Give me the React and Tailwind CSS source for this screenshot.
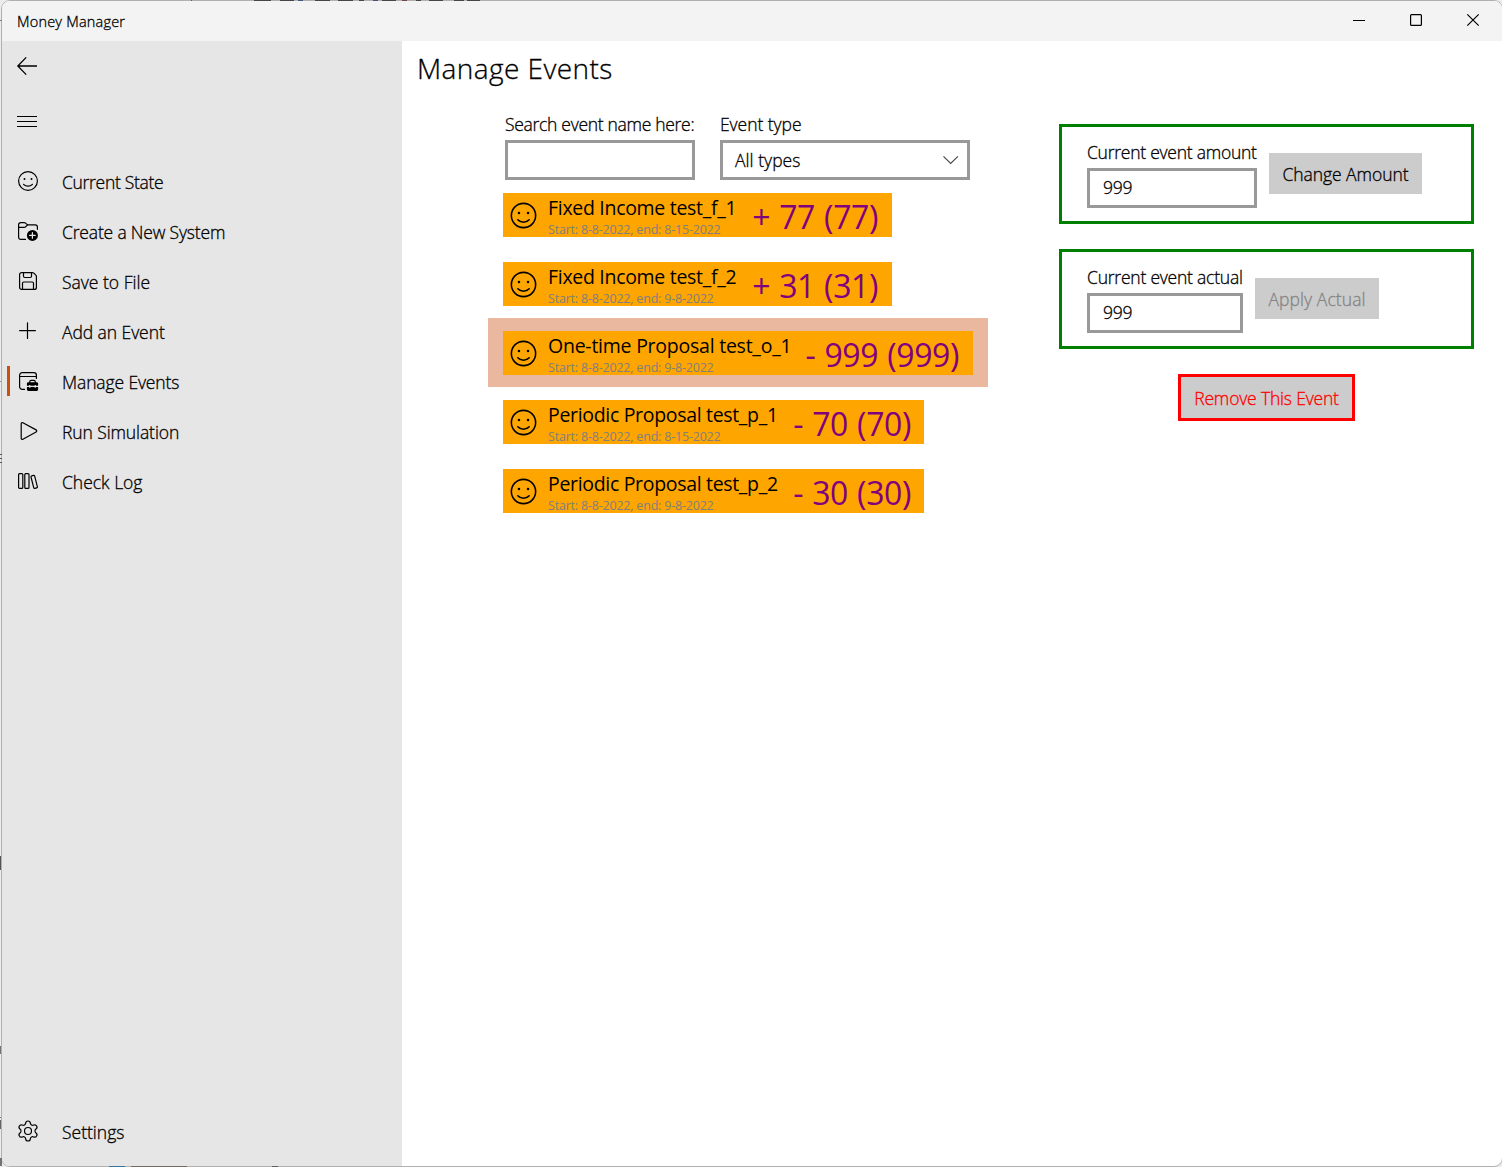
const stroke = { fill: "none", stroke: "currentColor", strokeWidth: 1.2, strokeLinecap: "round", strokeLinejoin: "round" };

function Svg({ children, className = "size-6" }) {
  return (
    <svg viewBox="0 0 24 24" className={`${className} shrink-0`} {...stroke}>
      {children}
    </svg>
  );
}

function Smiley({ className }) {
  return (
    <Svg className={className}>
      <circle cx="12" cy="12" r="9.4" />
      <circle cx="8.5" cy="10" r="1" fill="currentColor" stroke="none" />
      <circle cx="15.5" cy="10" r="1" fill="currentColor" stroke="none" />
      <path d="M7.6 15.3c2.2 2.5 6.6 2.5 8.8 0" />
    </Svg>
  );
}

function FolderAdd() {
  return (
    <Svg>
      <path d="M9.5 20.4H4.7a2.1 2.1 0 0 1-2.1-2.1V5.7a2.1 2.1 0 0 1 2.1-2.1h3.4c.5 0 1 .2 1.4.5l2.1 1.8h7.7a2.1 2.1 0 0 1 2.1 2.1v2.3" />
      <path d="M2.6 8.4h5.6c.5 0 1-.2 1.4-.6l2-1.9" />
      <circle cx="16.4" cy="16.4" r="5.5" fill="currentColor" stroke="none" />
      <path d="M16.4 13.6v5.6M13.6 16.4h5.6" stroke="#e6e6e6" />
    </Svg>
  );
}

function Save() {
  return (
    <Svg>
      <path d="M3.6 5.6a2 2 0 0 1 2-2h10.7c.6 0 1.1.2 1.5.6l2 2c.4.4.6.9.6 1.5v10.7a2 2 0 0 1-2 2H5.6a2 2 0 0 1-2-2z" />
      <path d="M7.5 3.6v3.7c0 .7.5 1.2 1.2 1.2h5.6c.7 0 1.2-.5 1.2-1.2V3.6" />
      <path d="M6.5 20.4v-6.2c0-.7.5-1.2 1.2-1.2h8.6c.7 0 1.2.5 1.2 1.2v6.2" />
    </Svg>
  );
}

function Add() {
  return (
    <Svg>
      <path d="M11.5 3.8v15.7M3.6 11.6h15.8" />
    </Svg>
  );
}

function WindowToolbox() {
  return (
    <Svg>
      <path d="M8.5 20.4H6.2a2.6 2.6 0 0 1-2.6-2.6V6.2a2.6 2.6 0 0 1 2.6-2.6h11.6a2.6 2.6 0 0 1 2.6 2.6v3.3M3.6 7.5h16.8" />
      <path d="M13.8 13.5v-1c0-.7.5-1.2 1.2-1.2h3c.7 0 1.2.5 1.2 1.2v1" />
      <path
        d="M12.3 13.2h8.4c.8 0 1.4.6 1.4 1.4v2.1h-2.3v-.8h-1.2v.8h-4.2v-.8h-1.2v.8h-2.3v-2.1c0-.8.6-1.4 1.4-1.4zM10.9 17.9h2.3v.8h1.2v-.8h4.2v.8h1.2v-.8h2.3v2.6c0 .8-.6 1.4-1.4 1.4h-8.400c-.8 0-1.400-.6-1.400-1.400z"
        fill="currentColor"
        stroke="none"
      />
    </Svg>
  );
}

function Play() {
  return (
    <Svg>
      <path d="M5.200 4.700c0-.9.900-1.400 1.700-1l13.200 7.200c.8.400.8 1.600 0 2L6.900 20.300c-.8.400-1.700-.1-1.700-1z" />
    </Svg>
  );
}

function Library() {
  return (
    <Svg>
      <rect x="2.6" y="4.6" width="4.2" height="14.8" rx="1" />
      <rect x="8.8" y="4.6" width="4.2" height="14.8" rx="1" />
      <path d="M15.700 6.900l1.900-.5c.5-.1 1 .1 1.100.7l2.700 10.700c.1.500-.1 1-.7 1.100l-1.900.5c-.5.100-1-.1-1.100-.7L15 8c-.1-.5.200-1 .7-1.100z" />
    </Svg>
  );
}

function Gear() {
  return (
    <Svg>
      <path d="M9.671 4.136a2.34 2.34 0 0 1 4.659 0 2.34 2.34 0 0 0 3.319 1.915 2.34 2.34 0 0 1 2.33 4.033 2.34 2.34 0 0 0 0 3.831 2.34 2.34 0 0 1-2.33 4.033 2.34 2.34 0 0 0-3.319 1.915 2.34 2.34 0 0 1-4.659 0 2.34 2.34 0 0 0-3.32-1.915 2.34 2.34 0 0 1-2.33-4.033 2.34 2.34 0 0 0 0-3.831A2.34 2.34 0 0 1 6.35 6.051a2.34 2.34 0 0 0 3.319-1.915" />
      <circle cx="12" cy="12" r="3.5" />
    </Svg>
  );
}

const nav = [
  { label: "Current State", Icon: Smiley, tracking: "tracking-[-0.30px]" },
  { label: "Create a New System", Icon: FolderAdd, tracking: "tracking-[-0.17px]" },
  { label: "Save to File", Icon: Save, tracking: "tracking-normal" },
  { label: "Add an Event", Icon: Add, tracking: "tracking-[-0.07px]" },
  { label: "Manage Events", Icon: WindowToolbox, tracking: "tracking-[-0.12px]", active: true },
  { label: "Run Simulation", Icon: Play, tracking: "tracking-[-0.10px]" },
  { label: "Check Log", Icon: Library, tracking: "tracking-normal" },
];

const events = [
  { name: "Fixed Income test_f_1", dates: "Start: 8-8-2022, end: 8-15-2022", amount: "+ 77 (77)", width: "w-[389px]", pad: "pr-[14px]", track: "tracking-[-0.30px]" },
  { name: "Fixed Income test_f_2", dates: "Start: 8-8-2022, end: 9-8-2022", amount: "+ 31 (31)", width: "w-[389px]", pad: "pr-[14px]", track: "tracking-[-0.30px]" },
  { name: "One-time Proposal test_o_1", dates: "Start: 8-8-2022, end: 9-8-2022", amount: "- 999 (999)", width: "w-[470px]", pad: "pr-[14px]", track: "tracking-[-0.24px]", selected: true },
  { name: "Periodic Proposal test_p_1", dates: "Start: 8-8-2022, end: 8-15-2022", amount: "- 70 (70)", width: "w-[421px]", pad: "pr-[13px]", track: "tracking-[-0.32px]" },
  { name: "Periodic Proposal test_p_2", dates: "Start: 8-8-2022, end: 9-8-2022", amount: "- 30 (30)", width: "w-[421px]", pad: "pr-[13px]", track: "tracking-[-0.32px]" },
];

// Slivers of the windows behind this one: [x, y, width, height, colour]
const backdrop = [
  [191, 0, 1, 1, "#555"],
  [254, 0, 17, 1, "#3b383c"], [280, 0, 14, 1, "#3b383c"], [298, 0, 5, 1, "#3b4a7c"], [315, 0, 15, 1, "#3b383c"],
  [338, 0, 15, 1, "#3b383c"], [359, 0, 5, 1, "#3b383c"], [373, 0, 5, 1, "#3b4a6c"], [382, 0, 14, 1, "#3b383c"],
  [402, 0, 5, 1, "#6b3a3c"], [416, 0, 5, 1, "#3b383c"], [429, 0, 14, 1, "#3b383c"], [454, 0, 10, 1, "#3b383c"], [467, 0, 13, 1, "#3b383c"],
  [0, 20, 2, 1, "#777"], [0, 381, 1, 1, "#888"], [0, 454, 2, 1, "#444"], [0, 458, 2, 1, "#444"], [0, 462, 2, 1, "#444"],
  [0, 856, 1, 14, "#444"], [0, 1046, 1, 8, "#666"], [0, 1117, 1, 1, "#666"], [0, 1120, 1, 9, "#555"], [0, 1158, 2, 8, "#666"],
  [109, 1166, 16, 1, "#2b6f96"], [131, 1166, 56, 1, "#6b625c"], [272, 1166, 6, 1, "#555"],
];

function NavItem({ label, Icon, tracking, active }) {
  return (
    <div className="flex h-[50px] items-center pl-[5px]">
      <span className={`h-[30px] w-[3px] ${active ? "bg-[#ca5010]" : ""}`} />
      <span className="ml-[6px]">
        <Icon />
      </span>
      <span className={`ml-[22px] pt-[2px] ${tracking}`}>{label}</span>
    </div>
  );
}

function EventCard({ name, dates, amount, width, pad, track, selected }) {
  return (
    <div className={`h-[69px] px-[15px] pt-[13px] pb-3 ${selected ? "bg-[#e9b89f]" : ""}`}>
      <div className={`flex h-11 bg-[#ffa500] ${pad} ${width}`}>
        <div className="flex w-[45px] items-center pt-px pl-[5px]">
          <Smiley className="size-[31px]" />
        </div>
        <div className="pt-px font-normal [-webkit-text-stroke:0]">
          <div className={`text-[19.5px] leading-7 ${track}`}>{name}</div>
          <div className="text-[12.5px] leading-4 tracking-[-0.2px] text-[#808080]">{dates}</div>
        </div>
        <div className="ml-auto text-[32px] leading-[47px] font-normal tracking-[-0.4px] text-[#800080] [word-spacing:1.2px] [-webkit-text-stroke:0]">
          {amount}
        </div>
      </div>
    </div>
  );
}

function Field({ label, tracking, width, value, children }) {
  return (
    <div className={width}>
      <div className={`mb-[5px] leading-[22px] ${tracking}`}>{label}</div>
      <div className="flex h-10 items-center justify-between border-3 border-[#999999] bg-white px-3 leading-5">
        {value}
        {children}
      </div>
    </div>
  );
}

function Panel({ children }) {
  return <div className="flex h-[100px] w-full gap-3 border-3 border-[#008000] pt-[14px] pl-[25px]">{children}</div>;
}

export default function App() {
  return (
    <div className="relative h-[1167px] w-full overflow-hidden bg-[#ececec] pl-px font-['Open_Sans','Noto_Sans',sans-serif] text-[17.5px] font-light whitespace-nowrap text-black [-webkit-text-stroke:0.3px]">
      <div className="flex h-full w-[1502px] flex-col overflow-hidden rounded-[9px] border border-[#b0b0b0] bg-white">
        <header className="flex h-10 shrink-0 items-center justify-between bg-[#f3f3f3] pl-[15px]">
          <span className="pt-px text-[14.5px] tracking-[0.2px]">Money Manager</span>
          <div className="flex pr-[6px]">
            <svg className="h-10 w-[154px]" viewBox="0 0 154 40" fill="none" stroke="#000" strokeWidth="1.2">
              <path d="M11 19.5h12" />
              <rect x="68.6" y="13.6" width="10.8" height="10.8" rx="1" />
              <path d="M125.3 13.3l11.4 11.4M136.7 13.3l-11.4 11.4" />
            </svg>
          </div>
        </header>

        <div className="flex min-h-0 flex-1">
          <aside className="flex w-[400px] shrink-0 flex-col bg-[#e6e6e6]">
            <div className="h-[50px] pt-[13px] pl-[13px]">
              <svg className="size-6" viewBox="0 0 24 24" fill="none" stroke="currentColor" strokeWidth="1.3">
                <path d="M2.8 12H22M11.2 3.4 2.8 12l8.4 8.6" />
              </svg>
            </div>
            <div className="flex h-[65px] flex-col gap-1 pt-[25px] pl-[15px]">
              <span className="h-px w-5 bg-black" />
              <span className="h-px w-5 bg-black" />
              <span className="h-px w-5 bg-black" />
            </div>
            <nav>
              {nav.map((item) => (
                <NavItem key={item.label} {...item} />
              ))}
            </nav>
            <div className="mt-auto mb-[10px]">
              <NavItem label="Settings" Icon={Gear} tracking="tracking-normal" />
            </div>
          </aside>

          <main className="flex-1">
            <h1 className="pl-[15px] text-[28px] leading-[54px] tracking-[0.42px]">Manage Events</h1>
            <div className="flex gap-[71px] pl-[86px]">
              <section className="w-[500px] pt-[18px]">
                <div className="flex gap-[25px] pl-[17px]">
                  <Field label="Search event name here:" tracking="tracking-[-0.30px]" width="w-[190px]" />
                  <Field
                    label="Event type"
                    tracking="tracking-[-0.05px]"
                    width="w-[250px]"
                    value={<span className="tracking-[0.05px]">All types</span>}
                  >
                    <svg className="-mr-1.5 h-4 w-5" viewBox="0 0 20 16" fill="none" stroke="#444" strokeWidth="1.1">
                      <path d="M2.5 4.300l7.200 7.200 7.200-7.200" />
                    </svg>
                  </Field>
                </div>
                {events.map((event) => (
                  <EventCard key={event.name} {...event} />
                ))}
              </section>

              <section className="flex w-[415px] flex-col items-center gap-[25px] pt-[29px]">
                <Panel>
                  <Field label="Current event amount" tracking="tracking-[-0.25px]" width="w-[170px]" value={<span className="pb-[2px] pl-px tracking-[-0.20px]">999</span>} />
                  <button className="mt-3 h-[41px] w-[153px] bg-[#cccccc] pt-[2px] tracking-[-0.05px]">Change Amount</button>
                </Panel>
                <Panel>
                  <Field label="Current event actual" tracking="tracking-[-0.22px]" width="w-[156px]" value={<span className="pb-[2px] pl-px tracking-[-0.20px]">999</span>} />
                  <button className="mt-3 h-[41px] w-[124px] bg-[#cccccc] pt-[2px] tracking-[0.08px] text-[#858585]">Apply Actual</button>
                </Panel>
                <button className="h-[47px] w-[177px] border-3 border-[#ff0000] bg-[#cccccc] pt-[2px] tracking-[-0.18px] text-[#ff0000]">
                  Remove This Event
                </button>
              </section>
            </div>
          </main>
        </div>
      </div>
      {backdrop.map(([left, top, width, height, background]) => (
        <span key={`${left}-${top}`} className="absolute opacity-90" style={{ left, top, width, height, background }} />
      ))}
    </div>
  );
}
